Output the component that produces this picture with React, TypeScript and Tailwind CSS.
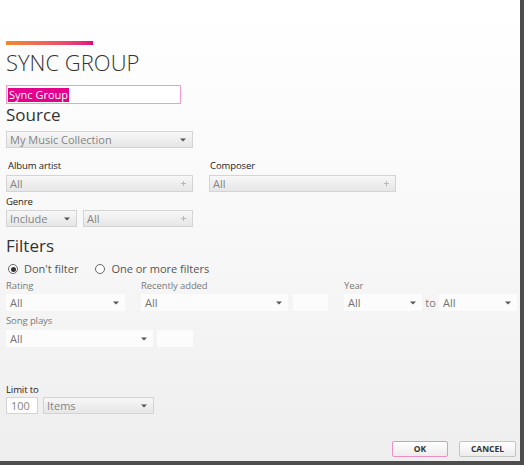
import React from 'react';

const font = { fontFamily: '"Open Sans", "Noto Sans", sans-serif' };

function Arrow() {
  return (
    <svg width="6" height="4" viewBox="0 0 6 4" className="shrink-0">
      <path d="M0 0.5 L6 0.5 L3 3.5 Z" fill="#555" />
    </svg>
  );
}

function Plus() {
  return (
    <svg width="5" height="5" viewBox="0 0 5 5" className="shrink-0">
      <path d="M2.5 0 V5 M0 2.5 H5" stroke="#b8b8b8" strokeWidth="1" />
    </svg>
  );
}

// grey combo box with gradient, used in the Source section
function Combo({ value, w, plus }: { value: string; w: string; plus?: boolean }) {
  return (
    <div
      className={`${w} h-[17px] flex items-center justify-between pl-[3px] pr-[6px] border border-[#d4d4d4] bg-gradient-to-b from-[#f7f7f7] to-[#e6e6e6] text-[11px] text-[#858585] leading-none`}
    >
      <span>{value}</span>
      {plus ? <Plus /> : <Arrow />}
    </div>
  );
}

// flat filter select, disabled look
function Flat({ w, arrow = true, value = 'All' }: { w: string; arrow?: boolean; value?: string }) {
  return (
    <div
      className={`${w} h-[17px] flex items-center justify-between pl-[4px] pr-[6px] bg-[#fcfcfc] text-[11px] text-[#737373] leading-none`}
    >
      <span>{value}</span>
      {arrow && <Arrow />}
    </div>
  );
}

function Label({ children, dim }: { children: React.ReactNode; dim?: boolean }) {
  return (
    <div className={`text-[9.5px] leading-[12px] tracking-[-0.1px] ${dim ? 'text-[#7a7a7a]' : 'text-[#222]'}`}>{children}</div>
  );
}

function Radio({ checked, label }: { checked?: boolean; label: string }) {
  return (
    <div className="flex items-center gap-[6px]">
      <div className="w-[10px] h-[10px] rounded-full border border-[#666] bg-white flex items-center justify-center">
        {checked && <div className="w-[5px] h-[5px] rounded-full bg-[#333]" />}
      </div>
      <span className="text-[11px] leading-[14px] text-[#555]">{label}</span>
    </div>
  );
}

export default function App() {
  return (
    <div
      style={font}
      className="w-[524px] h-[465px] overflow-hidden border-r-[4px] border-b-[4px] border-[#4d4d4d] bg-gradient-to-b from-white via-[#f8f8f8] to-[#eeeeee]"
    >
      <div className="pl-[6px] pt-[41px] flex flex-col">
        <div className="w-[87px] h-[4px] bg-gradient-to-r from-[#f08a24] to-[#e6007e]" />
        <div className="mt-[4px] text-[22px] leading-[26px] font-light text-[#333]">SYNC GROUP</div>

        <div className="mt-[10px] w-[175px] h-[19px] border border-[#f39acb] bg-white flex items-center pl-[1px]">
          <span className="bg-[#e3008c] text-white text-[11px] leading-[14px] px-[1px]">Sync Group</span>
        </div>

        <div className="mt-[1px] text-[17px] leading-[20px] text-[#333]">Source</div>
        <div className="mt-[6px]">
          <Combo value="My Music Collection" w="w-[187px]" />
        </div>

        <div className="mt-[12px] flex gap-[16px]">
          <div className="flex flex-col w-[187px]">
            <div className="pl-[2px]"><Label>Album artist</Label></div>
            <div className="mt-[3px]"><Combo value="All" w="w-[187px]" plus /></div>
          </div>
          <div className="flex flex-col w-[187px]">
            <div className="pl-[1px]"><Label>Composer</Label></div>
            <div className="mt-[3px]"><Combo value="All" w="w-[187px]" plus /></div>
          </div>
        </div>

        <div className="mt-[4px]"><Label>Genre</Label></div>
        <div className="mt-[2px] flex gap-[6px]">
          <Combo value="Include" w="w-[71px]" />
          <Combo value="All" w="w-[110px]" plus />
        </div>

        <div className="mt-[9px] text-[17px] leading-[20px] text-[#333]">Filters</div>
        <div className="mt-[6px] pl-[2px] flex gap-[17px]">
          <Radio checked label="Don't filter" />
          <Radio label="One or more filters" />
        </div>

        <div className="mt-[4px] flex">
          <div className="flex flex-col">
            <Label dim>Rating</Label>
            <div className="mt-[2px]"><Flat w="w-[119px]" /></div>
          </div>
          <div className="flex flex-col ml-[16px]">
            <Label dim>Recently added</Label>
            <div className="mt-[2px] flex gap-[5px]">
              <Flat w="w-[147px]" />
              <Flat w="w-[35px]" arrow={false} value="" />
            </div>
          </div>
          <div className="flex flex-col ml-[16px]">
            <Label dim>Year</Label>
            <div className="mt-[2px] flex items-center">
              <Flat w="w-[78px]" />
              <span className="w-[17px] text-center text-[11px] leading-none text-[#7a7a7a]">to</span>
              <Flat w="w-[78px]" />
            </div>
          </div>
        </div>

        <div className="mt-[4px]"><Label dim>Song plays</Label></div>
        <div className="mt-[3px] flex gap-[4px]">
          <Flat w="w-[147px]" />
          <Flat w="w-[36px]" arrow={false} value="" />
        </div>

        <div className="mt-[37px]"><Label>Limit to</Label></div>
        <div className="mt-[1px] flex gap-[5px]">
          <div className="w-[32px] h-[17px] border border-[#d4d4d4] bg-white flex items-center pl-[4px] text-[11px] leading-none text-[#858585]">100</div>
          <Combo value="Items" w="w-[111px]" />
        </div>

        <div className="mt-[27px] pr-[4px] flex justify-end gap-[11px]">
          <button className="w-[56px] h-[16px] rounded-[2px] border border-[#ee8fc4] bg-gradient-to-b from-white to-[#ececec] text-[8.5px] font-bold leading-none text-[#333]">
            OK
          </button>
          <button className="w-[57px] h-[16px] rounded-[2px] border border-[#c4c4c4] bg-gradient-to-b from-white to-[#ececec] text-[8.5px] font-bold leading-none text-[#333]">
            CANCEL
          </button>
        </div>
      </div>
    </div>
  );
}
